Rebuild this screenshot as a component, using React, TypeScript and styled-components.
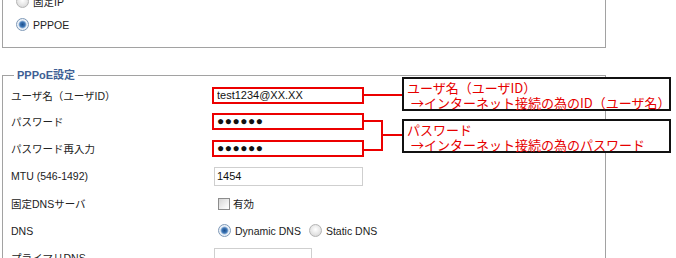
import React from "react";
import styled, { createGlobalStyle } from "styled-components";

const GlobalStyle = createGlobalStyle`
  html, body {
    margin: 0;
    padding: 0;
    background: #ffffff;
    overflow: hidden;
  }
  body {
    font-family: "Liberation Sans", "Noto Sans CJK JP", sans-serif;
    font-size: 10.5px;
    color: #222222;
  }
`;

const Page = styled.div`
  position: relative;
  width: 676px;
  height: 258px;
  padding-left: 2px;
  box-sizing: border-box;
  overflow: hidden;
`;

const Box = styled.fieldset<{ $top?: boolean }>`
  box-sizing: border-box;
  width: 604px;
  margin: 0;
  margin-top: ${(p) => (p.$top ? "-18px" : "20px")};
  padding: ${(p) => (p.$top ? "7px 0 11px 13px" : "0 0 0 8px")};
  border: 1px solid #a2a2a2;
`;

const Legend = styled.legend`
  margin-left: 3px;
  padding: 0 3px;
  height: 14px;
  line-height: 14px;
  font-weight: bold;
  font-size: 11px;
  color: #3e5f94;
`;

const ChoiceRow = styled.label`
  display: flex;
  align-items: center;
  gap: 4px;
  height: 23px;
`;

const Row = styled.div<{ $h: number }>`
  display: grid;
  grid-template-columns: 203px 1fr;
  align-items: center;
  height: ${(p) => p.$h}px;
`;

const Label = styled.div`
  white-space: nowrap;
`;

const Control = styled.div<{ $indent?: boolean }>`
  display: flex;
  align-items: center;
  gap: 4px;
  padding-left: ${(p) => (p.$indent ? 4 : 0)}px;
`;

const TextInput = styled.input<{ $w: number; $marked?: boolean }>`
  box-sizing: border-box;
  width: ${(p) => p.$w}px;
  height: ${(p) => (p.$marked ? 17 : 19)}px;
  margin: 0 0 0 ${(p) => (p.$marked ? -2 : 0)}px;
  padding: 0 0 0 ${(p) => (p.$marked ? 3 : 2)}px;
  border: ${(p) => (p.$marked ? "2px solid #ec0000" : "1px solid #cfcfcf")};
  border-radius: 0;
  background: #ffffff;
  font-family: "Liberation Sans", sans-serif;
  font-size: 11px;
  color: #111111;
  outline: none;
`;

const Secret = styled(TextInput)`
  font-size: 12px;
  letter-spacing: 0.5px;
  font-weight: bold;
`;

const Radio = styled.input.attrs({ type: "radio" })<{ $spaced?: boolean }>`
  appearance: none;
  box-sizing: border-box;
  width: 13px;
  height: 13px;
  margin: 0 0 0 ${(p) => (p.$spaced ? 4 : 0)}px;
  border-radius: 50%;
  border: 1px solid #b4b4b4;
  background: radial-gradient(circle at 50% 40%, #ffffff 0, #e4e4e4 60%, #cfcfcf 100%);
  &:checked {
    border-color: #7f9ab8;
    background: radial-gradient(
      circle,
      #1d4f8c 0,
      #3f78b8 2.6px,
      #9fbcdc 3.6px,
      #eef3f9 4.4px,
      #dfe6ee 100%
    );
  }
`;

const Check = styled.input.attrs({ type: "checkbox" })`
  appearance: none;
  box-sizing: border-box;
  width: 12px;
  height: 12px;
  margin: 0 -1px 0 0;
  border: 1px solid #8c8c8c;
  background: linear-gradient(135deg, #d4d4d4 0%, #f4f4f4 70%, #ffffff 100%);
`;

const Links = styled.svg`
  position: absolute;
  left: 0;
  top: 0;
  pointer-events: none;
`;

const Callout = styled.div<{ $top: number }>`
  position: absolute;
  left: 402px;
  top: ${(p) => p.$top}px;
  box-sizing: border-box;
  width: 269px;
  height: 34px;
  padding: 1px 0 0 3px;
  border: 2px solid #111111;
  background: #ffffff;
  font-family: "Noto Sans CJK JP", sans-serif;
  font-size: 13px;
  line-height: 15px;
  color: #e60000;
  white-space: nowrap;
`;

const Indent = styled.span`
  padding-left: 4px;
`;

export default function App() {
  return (
    <Page>
      <GlobalStyle />
      <Box $top>
        <ChoiceRow>
          <Radio name="wan" />
          固定IP
        </ChoiceRow>
        <ChoiceRow>
          <Radio name="wan" defaultChecked />
          PPPOE
        </ChoiceRow>
      </Box>

      <Box>
        <Legend>PPPoE設定</Legend>
        <Row $h={26}>
          <Label>ユーザ名（ユーザID）</Label>
          <Control>
            <TextInput $w={152} $marked readOnly defaultValue="test1234@XX.XX" />
          </Control>
        </Row>
        <Row $h={26}>
          <Label>パスワード</Label>
          <Control>
            <Secret $w={152} $marked readOnly defaultValue="●●●●●●" />
          </Control>
        </Row>
        <Row $h={28}>
          <Label>パスワード再入力</Label>
          <Control>
            <Secret $w={152} $marked readOnly defaultValue="●●●●●●" />
          </Control>
        </Row>
        <Row $h={28}>
          <Label>MTU (546-1492)</Label>
          <Control>
            <TextInput $w={149} readOnly defaultValue="1454" />
          </Control>
        </Row>
        <Row $h={27}>
          <Label>固定DNSサーバ</Label>
          <Control $indent>
            <Check />
            有効
          </Control>
        </Row>
        <Row $h={27}>
          <Label>DNS</Label>
          <Control $indent>
            <Radio name="dns" defaultChecked />
            Dynamic DNS
            <Radio name="dns" $spaced />
            Static DNS
          </Control>
        </Row>
        <Row $h={27}>
          <Label>プライマリDNS</Label>
          <Control>
            <TextInput $w={98} readOnly defaultValue="" />
          </Control>
        </Row>
      </Box>

      <Links width="676" height="258">
        <g stroke="#ec0000" strokeWidth="2" fill="none">
          <line x1="364" y1="95" x2="402" y2="95" />
          <polyline points="364,121 382,121 382,150 364,150" />
          <line x1="382" y1="135" x2="402" y2="135" />
        </g>
      </Links>

      <Callout $top={77}>
        ユーザ名（ユーザID）
        <br />
        <Indent>→インターネット接続の為のID（ユーザ名）</Indent>
      </Callout>
      <Callout $top={119}>
        パスワード
        <br />
        <Indent>→インターネット接続の為のパスワード</Indent>
      </Callout>
    </Page>
  );
}
